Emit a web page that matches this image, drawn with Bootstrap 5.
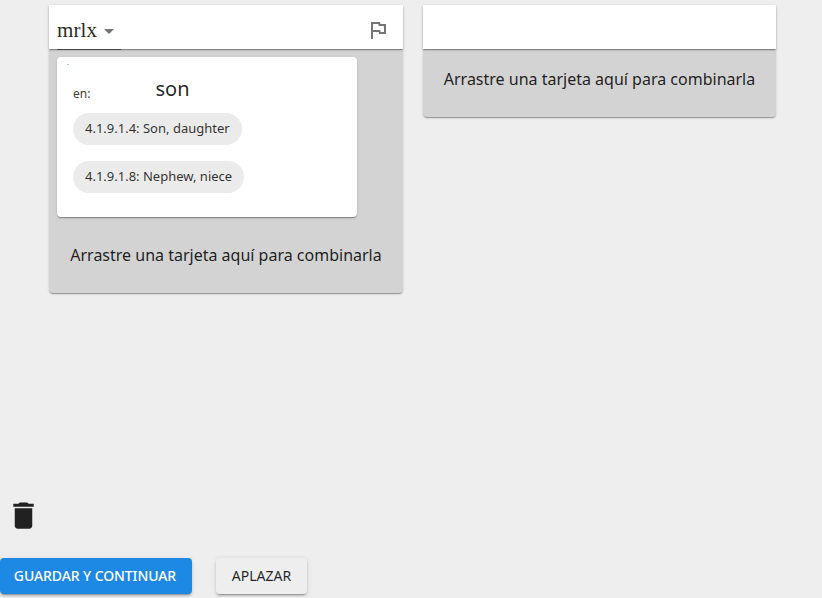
<!DOCTYPE html>
<html lang="es">
<head>
<meta charset="utf-8">
<meta name="viewport" content="width=device-width, initial-scale=1">
<title>Combinar duplicados</title>
<link href="https://cdn.jsdelivr.net/npm/bootstrap@5.3.0/dist/css/bootstrap.min.css" rel="stylesheet">
<style>
body{background:#eee;color:rgba(0,0,0,.87);font-family:"Noto Sans","Open Sans",sans-serif;font-size:16px;line-height:24px;height:598px;overflow:hidden}
svg{display:block;flex:none}
.elev{box-shadow:0 2px 1px -1px rgba(0,0,0,.2),0 1px 1px 0 rgba(0,0,0,.14),0 1px 3px 0 rgba(0,0,0,.12)}
.board{padding:5px 46px 0 49px;gap:20px;height:493px}
.word{width:354px;background:#d3d3d3;border-radius:4px}
.word + .word{width:353px}
.word-head{height:44px;background:#fff;position:relative}
.vern{width:64px;height:37px;border:0;border-bottom:1px solid #444;margin:8px 0 0 8px;background:none;font-family:"Liberation Serif",serif;font-size:21px;letter-spacing:.1px;line-height:35px;color:rgba(0,0,0,.87)}
.vern span{padding-bottom:2px}
.flag{margin:13px 13px 0 0;color:rgba(0,0,0,.54)}
.sense{width:300px;height:160px;margin:8px 8px 0;border-radius:4px;padding:20px 16px 0;position:relative}
.speck{position:absolute;left:10px;top:7px;width:2px;height:1px;background:#a9cbdc}
.gloss-lang{font-size:12px;width:82.5px;line-height:24px;padding-top:5px;color:rgba(0,0,0,.8)}
.gloss{font-size:20px;line-height:24px}
.gloss-row{height:36px}
.domain{height:32px;border-radius:16px;background:#ebebeb;font-size:13px;padding:0 12px;line-height:30px;width:max-content;color:rgba(0,0,0,.82)}
.domain + .domain{margin-top:16px}
.drop{height:68px;line-height:24px;padding-top:18px}
.sense + .drop{height:76px;padding-top:26px}
.trash{padding:5px 0 0 6px;height:65px}
.act{height:36px;border-radius:4px;font-size:14px;font-weight:400;line-height:36px;padding:0;border:0;color:rgba(0,0,0,.87);box-shadow:0 3px 1px -2px rgba(0,0,0,.2),0 2px 2px 0 rgba(0,0,0,.14),0 1px 5px 0 rgba(0,0,0,.12)}
.save{width:192px;background:#1e88e5;color:#fff;font-weight:500;padding-right:2px;letter-spacing:-.1px}
.defer{width:91px;background:#eee}
</style>
<script src="https://cdn.jsdelivr.net/npm/bootstrap@5.3.0/dist/js/bootstrap.bundle.min.js"></script>
</head>
<body>
<main class="board d-flex align-items-start">
  <section class="word elev">
    <header class="word-head elev d-flex justify-content-between align-items-start">
      <button class="vern p-0 d-flex align-items-center justify-content-between"><span>mrlx</span><svg width="24" height="24" viewBox="0 0 24 24" fill="#757575"><path d="M7 10l5 5 5-5z"/></svg></button>
      <svg class="flag" width="24" height="24" viewBox="0 0 24 24" fill="currentColor"><path d="M12.36 6l.4 2H18v6h-3.36l-.4-2H7V6h5.36M14 4H5v17h2v-7h5.6l.4 2h7V6h-5.6L14 4z"/></svg>
    </header>
    <article class="sense elev bg-white">
      <i class="speck"></i>
      <div class="gloss-row d-flex align-items-start"><span class="gloss-lang">en:</span><span class="gloss">son</span></div>
      <div class="domain">4.1.9.1.4: Son, daughter</div>
      <div class="domain">4.1.9.1.8: Nephew, niece</div>
    </article>
    <div class="drop text-center">Arrastre una tarjeta aquí para combinarla</div>
  </section>
  <section class="word elev">
    <header class="word-head elev"></header>
    <div class="drop text-center">Arrastre una tarjeta aquí para combinarla</div>
  </section>
</main>
<div class="trash"><svg width="35" height="35" viewBox="0 0 24 24" fill="#212121"><path d="M6 19c0 1.100.9 2 2 2h8c1.100 0 2-.9 2-2V7H6v12zM19 4h-3.500l-1-1h-5l-1 1H5v2h14V4z"/></svg></div>
<footer class="d-flex gap-4">
  <button class="btn act save">GUARDAR Y CONTINUAR</button>
  <button class="btn act defer">APLAZAR</button>
</footer>
</body>
</html>
